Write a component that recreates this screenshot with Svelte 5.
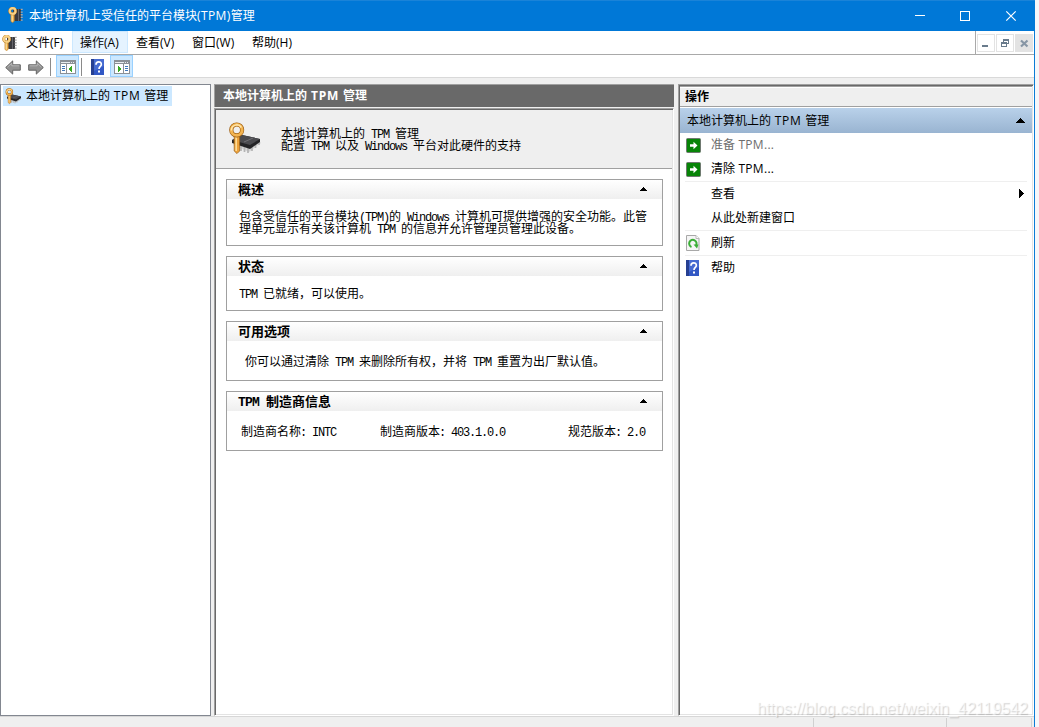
<script>
  const menus = [
    { label: '文件(F)', w: 55 },
    { label: '操作(A)', w: 56, active: true },
    { label: '查看(V)', w: 56 },
    { label: '窗口(W)', w: 60 },
    { label: '帮助(H)', w: 57 }
  ];

  const runs = (s) =>
    s.split(/([\x20-\x7e]+)/).filter(Boolean).map((t) => ({ t, latin: /^[\x20-\x7e]+$/.test(t) }));

  const cards = [
    {
      title: '概述',
      h: 67,
      kind: 'wide',
      lines: [
        '包含受信任的平台模块(TPM)的 Windows 计算机可提供增强的安全功能。此管',
        '理单元显示有关该计算机 TPM 的信息并允许管理员管理此设备。'
      ]
    },
    { title: '状态', h: 55, kind: 'status', lines: ['TPM 已就绪，可以使用。'] },
    { title: '可用选项', h: 60, kind: 'options', lines: ['你可以通过清除 TPM 来删除所有权，并将 TPM 重置为出厂默认值。'] },
    { title: 'TPM 制造商信息', h: 60, kind: 'vendor', lines: ['制造商名称: INTC', '制造商版本: 403.1.0.0', '规范版本: 2.0'] }
  ];

  const actions = [
    { label: '准备 TPM...', icon: 'go', disabled: true },
    { label: '清除 TPM...', icon: 'go', sep: true },
    { label: '查看', more: true },
    { label: '从此处新建窗口', sep: true },
    { label: '刷新', icon: 'refresh', sep: true },
    { label: '帮助', icon: 'help' }
  ];
</script>

{#snippet mix(s)}{#each runs(s) as r}{#if r.latin}<span class="en">{r.t}</span>{:else}{r.t}{/if}{/each}{/snippet}

{#snippet keyUpright()}
  <svg width="16" height="16" viewBox="0 0 16 16">
    <path d="M5 3l2-1h6v12H7l-2-1z" fill="#3a3a3e" />
    <path d="M13.700 1.700v12.600" stroke="#aaa" stroke-width="2" stroke-dasharray="1.300 1.400" />
    <path d="M10.500 2v12" stroke="#66666c" stroke-width="1" />
    <path d="M2.900 6.500h3.400v7.700l-1.600 1.500-1.800-1.300z" fill="#eeb04c" stroke="#b87a22" stroke-width=".5" />
    <path d="M4.200 7v7.500" stroke="#fde6ae" stroke-width="1" />
    <circle cx="4.600" cy="4" r="2.900" fill="none" stroke="#b87a22" stroke-width="2.900" />
    <circle cx="4.600" cy="4" r="2.900" fill="none" stroke="#f8d286" stroke-width="2.100" />
  </svg>
{/snippet}

{#snippet keyChip(size)}
  <svg width={size} height={size} viewBox="0 0 34 34">
    <path d="M5 23l16 7 12-9-2-2-21-1z" fill="#c9c9c9" opacity=".7" />
    <path d="M13 23v6M16.500 24v6M20 25v6M24 24v5M27.500 22v4M31 19v4" stroke="#b4b4b4" stroke-width="1.700" />
    <path d="M4 18l10-5 18 4v3l-10 7-18-6z" fill="#242426" />
    <path d="M4 18l10-5 18 4-10 6z" fill="#4b4b4f" />
    <path d="M16 20l9-4" stroke="#6f6f74" stroke-width="1" />
    <path d="M6.200 12h5.400v17l-2.600 2.600L6.200 29z" fill="#eda23a" stroke="#9a5b10" stroke-width=".7" />
    <path d="M8.200 13v16" stroke="#ffe09a" stroke-width="1.500" />
    <circle cx="8.700" cy="7.900" r="5.400" fill="none" stroke="#9a5b10" stroke-width="4.200" />
    <circle cx="8.700" cy="7.900" r="5.400" fill="none" stroke="#f3b450" stroke-width="3" />
    <path d="M3.400 8.500a5.400 5.400 0 0 1 10-3" fill="none" stroke="#ffe6ac" stroke-width="1.500" />
  </svg>
{/snippet}

{#snippet help(w, h)}
  <svg width={w} height={h} viewBox="0 0 13 16" preserveAspectRatio="none">
    <rect width="13" height="16" fill="#3157c4" />
    <rect width="3" height="16" fill="#263f91" />
    <path d="M3 0h10v7L3 12z" fill="#5578db" opacity=".6" />
    <path d="M5 5.700C5 1.800 10.500 2 10.300 5.400c0 2-2.300 2-2.300 4.600" fill="none" stroke="#fff" stroke-width="1.700" />
    <rect x="7" y="11.500" width="2" height="2" fill="#fff" />
  </svg>
{/snippet}

{#snippet paneIcon(right)}
  <svg width="17" height="15" viewBox="0 0 17 15" shape-rendering="crispEdges">
    <path d="M.5 .5h15v13H.5z" fill="#fff" stroke="#8b9096" />
    <path d="M1 1h14v3H1z" fill="#8b9096" />
    <path d="M1 2h9v1H1zM11 2h1v1h-1zM13 2h1v1h-1z" fill="#e8ebee" />
    {#if right}
      <path d="M9 4h1v10H9z" fill="#8b9096" />
      <path d="M11 6h3v1h-3zM11 8h3v1h-3zM11 10h3v1h-3z" fill="#3e78bb" />
      <path d="M4 6l4 3-4 3z" fill="#38a922" />
    {:else}
      <path d="M6 4h1v10H6z" fill="#8b9096" />
      <path d="M2 6h3v1H2zM2 8h3v1H2zM2 10h3v1H2z" fill="#3e78bb" />
      <path d="M12 6L8 9l4 3z" fill="#38a922" />
    {/if}
  </svg>
{/snippet}

{#snippet arrow(fwd)}
  <svg class:fwd width="16" height="15" viewBox="0 0 16 15">
    <path d="M.7 7.500l7-6.600v3.900h7.600v5.400H7.700v3.900z" fill="#929292" stroke="#646464" stroke-width="1" />
    <path d="M2.500 7.200l4.300-4v2.600h7.500" fill="none" stroke="#c0c0c0" stroke-width=".8" />
  </svg>
{/snippet}

<div class="page">
  <div class="window">
    <header class="title">
      <span class="app-icon">{@render keyUpright()}</span>
      <span class="caption">{@render mix('本地计算机上受信任的平台模块(TPM)管理')}</span>
      <svg class="controls" width="104" height="12" viewBox="0 0 104 12" fill="none" stroke="#fff">
        <path d="M0 5.500h10" shape-rendering="crispEdges" />
        <path d="M45.500 1.500h9v9h-9z" shape-rendering="crispEdges" />
        <path d="M91.300 1.300l9.400 9.400M100.700 1.300l-9.400 9.400" stroke-width="1.2" />
      </svg>
    </header>

    <nav class="menubar">
      <span class="menu-icon">{@render keyUpright()}</span>
      {#each menus as m}
        <span class="menu" class:active={m.active} style:width="{m.w}px">{@render mix(m.label)}</span>
      {/each}
      <div class="mdi">
        <span><svg width="16" height="16"><path d="M4 10h6v2H4z" fill="#697b8c" /></svg></span>
        <span>
          <svg width="16" height="16" viewBox="0 0 16 16" fill="none" stroke="#697b8c" shape-rendering="crispEdges">
            <path d="M6.500 7V4.500h5v4h-2M6 5.500h6" /><path d="M4.500 7.500h5v4h-5zM4 8.500h6" />
          </svg>
        </span>
        <span class="off"><svg width="16" height="16"><path d="M5 5.500l6.500 6M11.500 5.500l-6.500 6" stroke="#8796a5" stroke-width="2.2" /></svg></span>
      </div>
    </nav>

    <div class="toolbar">
      <span class="nav-btn">{@render arrow(false)}</span>
      <span class="nav-btn">{@render arrow(true)}</span>
      <i></i>
      <span class="tool on">{@render paneIcon(false)}</span>
      <i class="second"></i>
      <span class="tool book">{@render help(13, 16)}</span>
      <span class="tool on">{@render paneIcon(true)}</span>
    </div>

    <main>
      <aside class="tree">
        <div class="node">
          <span class="node-icon">{@render keyChip(17)}</span>
          <span class="wide-latin">{@render mix('本地计算机上的 TPM 管理')}</span>
        </div>
      </aside>

      <section class="center">
        <h1>{@render mix('本地计算机上的 TPM 管理')}</h1>
        <div class="content">
          <div class="banner">
            {@render keyChip(34)}
            <div class="song">
              <div>{@render mix('本地计算机上的 TPM 管理')}</div>
              <div>{@render mix('配置 TPM 以及 Windows 平台对此硬件的支持')}</div>
            </div>
          </div>
          <div class="cards">
            {#each cards as c}
              <article class="song" style:height="{c.h}px">
                <h2>
                  <span>{@render mix(c.title)}</span>
                  <svg width="7" height="4" shape-rendering="crispEdges"><path d="M3 0h1v1h1v1h1v1h1v1H0V3h1V2h1V1h1z" /></svg>
                </h2>
                <div class="text {c.kind}">
                  {#each c.lines as l}<div>{@render mix(l)}</div>{/each}
                </div>
              </article>
            {/each}
          </div>
        </div>
      </section>

      <aside class="actions">
        <h3>操作</h3>
        <div class="group wide-latin">
          <span>{@render mix('本地计算机上的 TPM 管理')}</span>
          <svg width="9" height="5" shape-rendering="crispEdges"><path d="M4 0h1v1h1v1h1v1h1v1h1v1H0V4h1V3h1V2h1V1h1z" /></svg>
        </div>
        {#each actions as a}
          <div class="action" class:disabled={a.disabled} class:sep={a.sep}>
            <span class="icon">
              {#if a.icon === 'go'}
                <svg width="15" height="15" viewBox="0 0 15 15">
                  <rect x=".5" y=".5" width="14" height="14" rx="1" fill="#078407" stroke="#6f7970" />
                  <path d="M4 6.200h3.500V3.700L11.500 7.500l-4 3.800V8.800H4z" fill="#fff" />
                </svg>
              {:else if a.icon === 'refresh'}
                <svg width="14" height="16" viewBox="0 0 14 16">
                  <path d="M.5 .5h9.500l3 3v12H.5z" fill="#f5f5f5" stroke="#a8a8a8" />
                  <path d="M10 .5v3h3" fill="#fff" stroke="#b8b8b8" />
                  <path d="M5.500 12A3.700 3.700 0 1 1 10 10.500" fill="none" stroke="#3bae37" stroke-width="2" />
                  <path d="M7.500 9.500h5l-1.500 4z" fill="#3bae37" />
                </svg>
              {:else if a.icon === 'help'}
                {@render help(13, 16)}
              {/if}
            </span>
            <span class="label">{@render mix(a.label)}</span>
            {#if a.more}
              <svg width="5" height="9" shape-rendering="crispEdges"><path d="M0 0h1v1h1v1h1v1h1v1h1v1H4v1H3v1H2v1H1v1H0z" /></svg>
            {/if}
          </div>
        {/each}
      </aside>
    </main>

    <footer><i></i><i></i><i></i></footer>
  </div>
  <div class="watermark">https://blog.csdn.net/weixin_42119542</div>
</div>

<style>
  :global(body) { background: #f6f6fa; }
  .page { position: relative; width: 1039px; height: 727px; overflow: hidden; background: #f6f7fa; font: 12px/16px "Open Sans", "Noto Sans CJK SC", sans-serif; color: #000; }
  .page * { box-sizing: border-box; }
  .en { white-space: pre; }
  svg { display: block; flex: none; }
  .window { width: 1035px; height: 727px; border-right: 1px solid #0b7cd6; background: #efefef; display: flex; flex-direction: column; }
  .title { height: 31px; flex: none; background: #0078d7; border-top: 1px solid #1a83d8; color: #fff; display: flex; align-items: center; padding: 0 19px 0 8px; margin-right: -1px; }
  .app-icon { margin-top: -2px; }
  .caption { margin-left: 5px; flex: 1; }
  .caption .en { letter-spacing: .4px; }
  .controls { margin-right: -3px; }
  .menubar { height: 24px; flex: none; display: flex; background: #fff; border-bottom: 1px solid #a9a9a9; }
  .menu-icon { width: 17px; padding: 4px 0 0 2px; }
  .menu { height: 22px; padding: 3px 0 0 8px; border: 1px solid transparent; }
  .menu.active { background: #e5f3ff; border-color: #cce8ff; padding-left: 7px; }
  .menu:nth-child(n + 4) { padding-left: 7px; }
  .mdi { margin-left: auto; display: flex; gap: 1px; border-left: 1px solid #a9a9a9; padding: 3px 1px 0 1px; }
  .mdi span { width: 18px; height: 18px; border: 1px solid #e3e3e3; overflow: hidden; }
  .mdi .off { background: #e3e3e3; }
  .toolbar { height: 23px; flex: none; background: #fff; border-bottom: 1px solid #d9d9d9; display: flex; align-items: center; padding-left: 5px; }
  .nav-btn { width: 23px; padding-top: 2px; }
  .nav-btn .fwd { transform: scaleX(-1); }
  .toolbar i { width: 1px; height: 18px; background: #8a8a8a; margin: 2px 5px 0 -1px; }
  .toolbar i.second { margin: 2px 4px 0 2px; }
  .tool { width: 24px; height: 22px; display: grid; place-items: center; }
  .tool.book { padding: 1px 2px 0 0; }
  .tool.on { width: 23px; background: #cce8ff; border: 1px solid #99d1ff; }
  .tool.on svg { margin: 3px 0 0 1px; }
  main { height: 632px; flex: none; margin-top: 6px; display: grid; grid-template-columns: 211px 460px 357px; column-gap: 3px; }
  .tree { border: 1px solid #828790; background: #fff; padding: 1px 0 0 2px; }
  .node { width: 169px; height: 20px; background: #cce8ff; display: flex; align-items: center; }
  .node-icon { width: 23px; padding-left: 2px; }
  .wide-latin .en { letter-spacing: .65px; }
  .center { display: flex; flex-direction: column; }
  h1 { margin: 0 0 1px; height: 23px; background: #696969; border-top: 1px solid #a0a0a0; border-left: 1px solid #a0a0a0; color: #fff; font: bold 12px/22px "Open Sans", "Noto Sans CJK SC", sans-serif; padding-left: 8px; }
  h1 .en { letter-spacing: .8px; }
  .content { flex: 1; background: #fff; border: 1px solid; border-color: #a0a0a0 #fff #fff #a0a0a0; box-shadow: inset 1px 1px #696969, inset -1px -1px #e3e3e3; padding: 1px; }
  .banner { height: 59px; background: #efefef; border-bottom: 1px solid #a0a0a0; display: flex; padding: 12px 0 0 12px; }
  .banner .song { margin-left: 19px; padding-top: 5px; }
  .song { font: 12px/12px "Noto Sans CJK SC", sans-serif; }
  .song .en { font-family: "Liberation Mono", monospace; letter-spacing: -1.2px; line-height: 1px; }
  .cards { padding: 10px; display: flex; flex-direction: column; gap: 10px; }
  article { width: 437px; border: 1px solid #a0a0a0; background: #fff; }
  h2 { margin: 0; height: 19px; background: linear-gradient(#fff, #efefef); display: flex; justify-content: space-between; align-items: center; padding: 0 15px 2px 11px; font: bold 13px/18px "Noto Sans CJK SC", sans-serif; }
  .song h2 .en { letter-spacing: -.8px; }
  .text { padding: 11px 0 0 12px; }
  .text.options { padding: 14px 0 0 18px; }
  .text.vendor { display: grid; grid-template-columns: 139px 188px 1fr; padding: 14px 0 0 14px; }
  .vendor .en { margin-left: -1px; }
  .actions { margin-left: 1px; background: #fff; border: 1px solid; border-color: #a0a0a0 #fff #fff #a0a0a0; box-shadow: inset 1px 1px #696969, inset -1px -1px #e3e3e3; padding: 1px; }
  h3 { margin: 0; height: 21px; background: #efefef; border: solid #a0a0a0; border-width: 1px 0; box-shadow: inset 0 1px #fff; font: bold 12px/19px "Open Sans", "Noto Sans CJK SC", sans-serif; padding-left: 5px; }
  .group { height: 25px; margin-top: 1px; background: linear-gradient(#b9d1ea, #99b4d1); display: flex; align-items: center; justify-content: space-between; padding: 0 7px; }
  .action { height: 24px; margin: 0 5px; display: flex; align-items: center; }
  .action.sep { height: 25px; border-bottom: 1px solid #efefef; }
  .action .en { letter-spacing: .3px; }
  .icon { width: 26px; padding-left: 1px; }
  .label { flex: 1; }
  .action > svg { margin: 0 3px 1px 0; }
  .disabled .label { color: #6d6d6d; }
  footer { height: 11px; border-top: 1px solid #d7d7d7; display: flex; justify-content: flex-end; padding: 1px 2px 0 0; }
  footer i { width: 1px; background: #d0d0d0; }
  footer i:nth-child(2) { margin: 0 84px 0 132px; }
  .watermark { position: absolute; left: 757px; top: 699px; font: 16px/20px "Liberation Sans", sans-serif; color: rgba(255, 255, 255, .6); text-shadow: 1px 1px 1px rgba(0, 0, 0, .18); }
</style>
